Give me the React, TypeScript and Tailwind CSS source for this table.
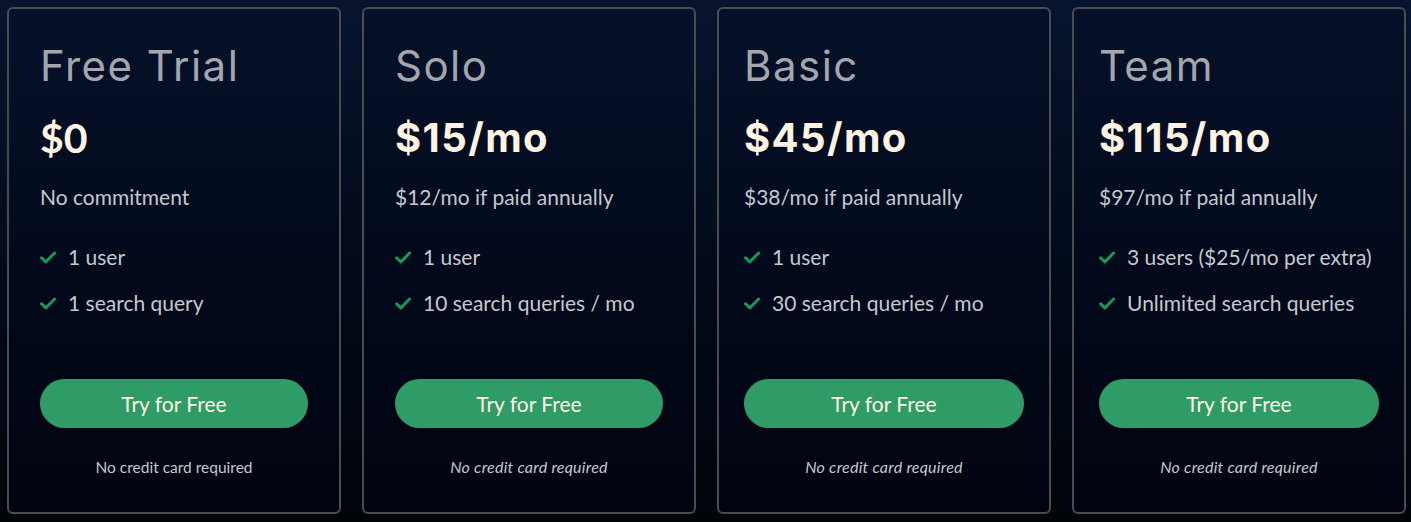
import React from "react";

type Plan = {
  name: string;
  price: string;
  sub: string;
  features: string[];
  italicNote: boolean;
  pad: string;
  priceFont: string;
};

const plans: Plan[] = [
  { name: "Free Trial", price: "$0", sub: "No commitment", features: ["1 user", "1 search query"], italicNote: false, pad: "px-[31px]", priceFont: "font-['Lato',sans-serif] text-[41px]" },
  { name: "Solo", price: "$15/mo", sub: "$12/mo if paid annually", features: ["1 user", "10 search queries / mo"], italicNote: true, pad: "px-[31px]", priceFont: "font-['Inter',sans-serif] text-[40px] tracking-[0.035em]" },
  { name: "Basic", price: "$45/mo", sub: "$38/mo if paid annually", features: ["1 user", "30 search queries / mo"], italicNote: true, pad: "px-[25px]", priceFont: "font-['Inter',sans-serif] text-[40px] tracking-[0.035em]" },
  { name: "Team", price: "$115/mo", sub: "$97/mo if paid annually", features: ["3 users ($25/mo per extra)", "Unlimited search queries"], italicNote: true, pad: "px-[25px]", priceFont: "font-['Inter',sans-serif] text-[40px] tracking-[0.035em]" },
];

function Check() {
  return (
    <svg width="16" height="13" viewBox="0 0 16 13" className="shrink-0">
      <path d="M1.6 6.8 L5.9 10.9 L14.6 2" fill="none" stroke="#17975e" strokeWidth="3" strokeLinecap="round" strokeLinejoin="round" />
    </svg>
  );
}

function Card({ plan }: { plan: Plan }) {
  return (
    <div className={`w-[334px] shrink-0 h-[507px] rounded-[6px] border-2 border-[#4a4c51] bg-gradient-to-b from-[#061129] to-[#01040f] pt-[31px] ${plan.pad} flex flex-col`}>
      <h3 className="font-['Inter',sans-serif] text-[42px] leading-[52px] text-[#a4a6ad] tracking-[0.035em]">{plan.name}</h3>
      <div className={`mt-[22px] font-bold leading-[48px] text-[#fff4e2] ${plan.priceFont}`}>{plan.price}</div>
      <p className="mt-[21px] text-[21px] leading-[28px] text-[#c5c8cf]">{plan.sub}</p>
      <ul className="mt-[32px] flex flex-col gap-[18px]">
        {plan.features.map((f) => (
          <li key={f} className="flex items-center gap-[12px] text-[21px] leading-[28px] text-[#c5c8cf]">
            <Check />
            <span>{f}</span>
          </li>
        ))}
      </ul>
      <button className="mt-auto h-[49px] w-full rounded-full bg-[#2f9b66] text-[21px] text-[#fff7e3]">Try for Free</button>
      <p className={`mt-[29px] mb-[35px] text-center leading-[20px] text-[#c5c8cf] ${plan.italicNote ? "italic text-[16px] tracking-[0.015em]" : "text-[15.5px]"}`}>
        No credit card required
      </p>
    </div>
  );
}

export default function App() {
  return (
    <div className="w-[1411px] h-[522px] bg-gradient-to-b from-[#08142e] to-[#000409] font-['Lato',sans-serif] pt-[7px] pl-[7px] flex gap-[21px]">
      {plans.map((p) => (
        <Card key={p.name} plan={p} />
      ))}
    </div>
  );
}
